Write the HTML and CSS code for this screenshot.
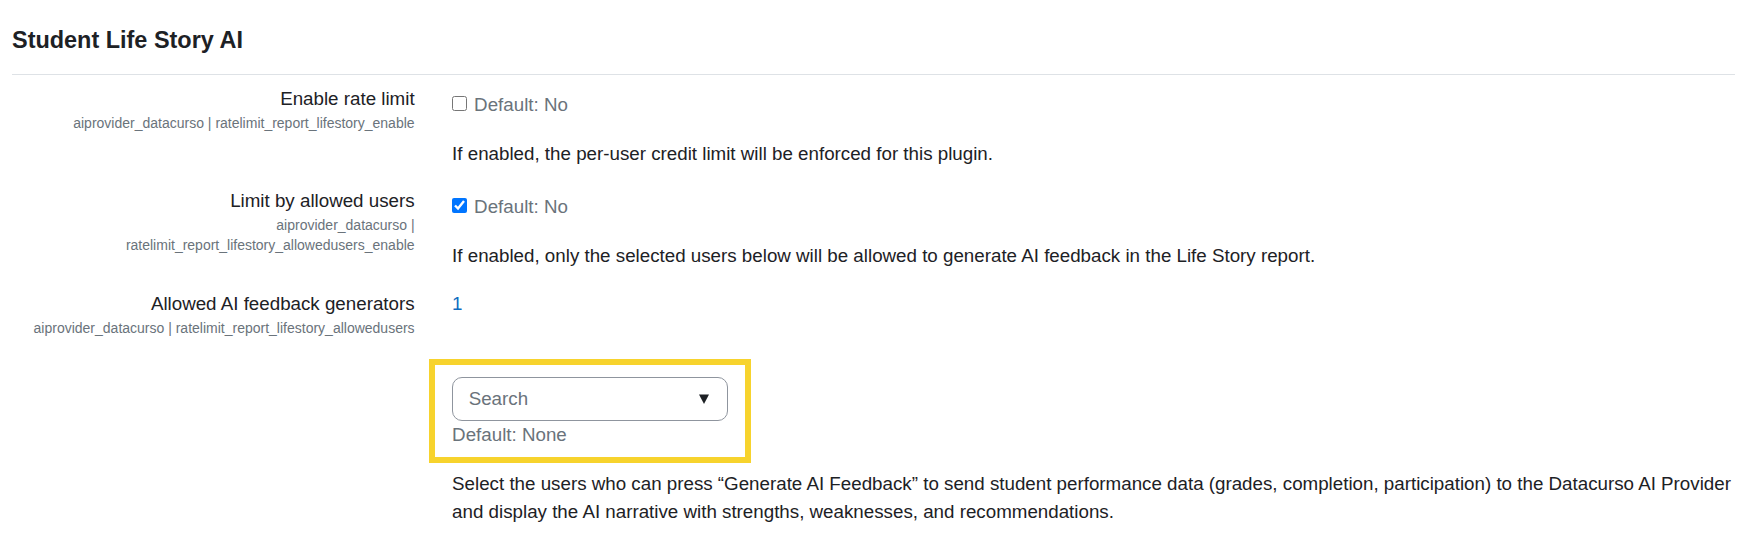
FILE: index.html
```html
<!DOCTYPE html>
<html lang="en">
<head>
<meta charset="utf-8">
<title>Student Life Story AI</title>
<link rel="stylesheet" href="styles.css">
</head>
<body>
<div class="page">
  <h3 class="title">Student Life Story AI</h3>
  <hr class="rule">

  <div class="setting">
    <div class="label-col">
      <div class="label">Enable rate limit</div>
      <div class="key">aiprovider_datacurso | ratelimit_report_lifestory_enable</div>
    </div>
    <div class="value-col">
      <div class="check-line">
        <input type="checkbox" class="check">
        <span class="muted">Default: No</span>
      </div>
      <p class="desc">If enabled, the per-user credit limit will be enforced for this plugin.</p>
    </div>
  </div>

  <div class="setting">
    <div class="label-col">
      <div class="label">Limit by allowed users</div>
      <div class="key">aiprovider_datacurso | ratelimit_report_lifestory_allowedusers_enable</div>
    </div>
    <div class="value-col">
      <div class="check-line">
        <input type="checkbox" class="check" checked>
        <span class="muted">Default: No</span>
      </div>
      <p class="desc">If enabled, only the selected users below will be allowed to generate AI feedback in the Life Story report.</p>
    </div>
  </div>

  <div class="setting">
    <div class="label-col">
      <div class="label">Allowed AI feedback generators</div>
      <div class="key">aiprovider_datacurso | ratelimit_report_lifestory_allowedusers</div>
    </div>
    <div class="value-col">
      <div class="count">1</div>
      <div class="highlight">
        <div class="select">
          <span class="placeholder">Search</span>
          <svg class="arrow" width="10" height="10" viewBox="0 0 10 10" aria-hidden="true"><polygon points="0,0.5 10,0.5 5,10" fill="#1d2125"/></svg>
        </div>
        <div class="muted">Default: None</div>
      </div>
      <p class="desc desc-after-box">Select the users who can press “Generate AI Feedback” to send student performance data (grades, completion, participation) to the Datacurso AI Provider and display the AI narrative with strengths, weaknesses, and recommendations.</p>
    </div>
  </div>
</div>
</body>
</html>
```

FILE: styles.css
```css
html, body {
  margin: 0;
  background: #ffffff;
}

body {
  font-family: "Liberation Sans", Arial, Helvetica, sans-serif;
  font-size: 18.75px;
  line-height: 28.125px;
  color: #1d2125;
}

.page {
  padding: 25.5px 28px 0 12px;
}

.title {
  margin: 0;
  font-size: 23.44px;
  line-height: 28.125px;
  font-weight: bold;
}

.rule {
  margin: 20.4px 0 10.1px 0;
  border: 0;
  border-top: 1px solid #dee2e6;
  height: 0;
}

.setting {
  display: grid;
  grid-template-columns: 402.6px 1fr;
  column-gap: 37.5px;
  margin-bottom: 19.4px;
}

.label-col {
  text-align: right;
}

.key {
  font-size: 14px;
  line-height: 20px;
  color: #6a737b;
}

.value-col {
  min-width: 0;
}

.check-line {
  display: flex;
  align-items: flex-start;
  padding-top: 6px;
}

.check {
  width: 14.5px;
  height: 14.5px;
  margin: 5px 7.5px 0 0;
  flex: none;
}

.muted {
  color: #6a737b;
}

.desc {
  margin: 20.6px 0 0 0;
}

.count {
  color: #0f6cbf;
}

.highlight {
  width: fit-content;
  margin: 41.5px 0 0 -23px;
  border: 6px solid #f7d32d;
  padding: 11.3px 17px 8.2px 17px;
}

.select {
  box-sizing: border-box;
  width: 276px;
  height: 44.4px;
  display: flex;
  align-items: center;
  justify-content: space-between;
  border: 1px solid #8f959e;
  border-radius: 10px;
  padding: 0 17.7px 0 15.6px;
}

.placeholder {
  color: #6a737b;
}

.arrow {
  display: block;
  margin-top: 1px;
}

.desc-after-box {
  margin-top: 6.4px;
}
```
